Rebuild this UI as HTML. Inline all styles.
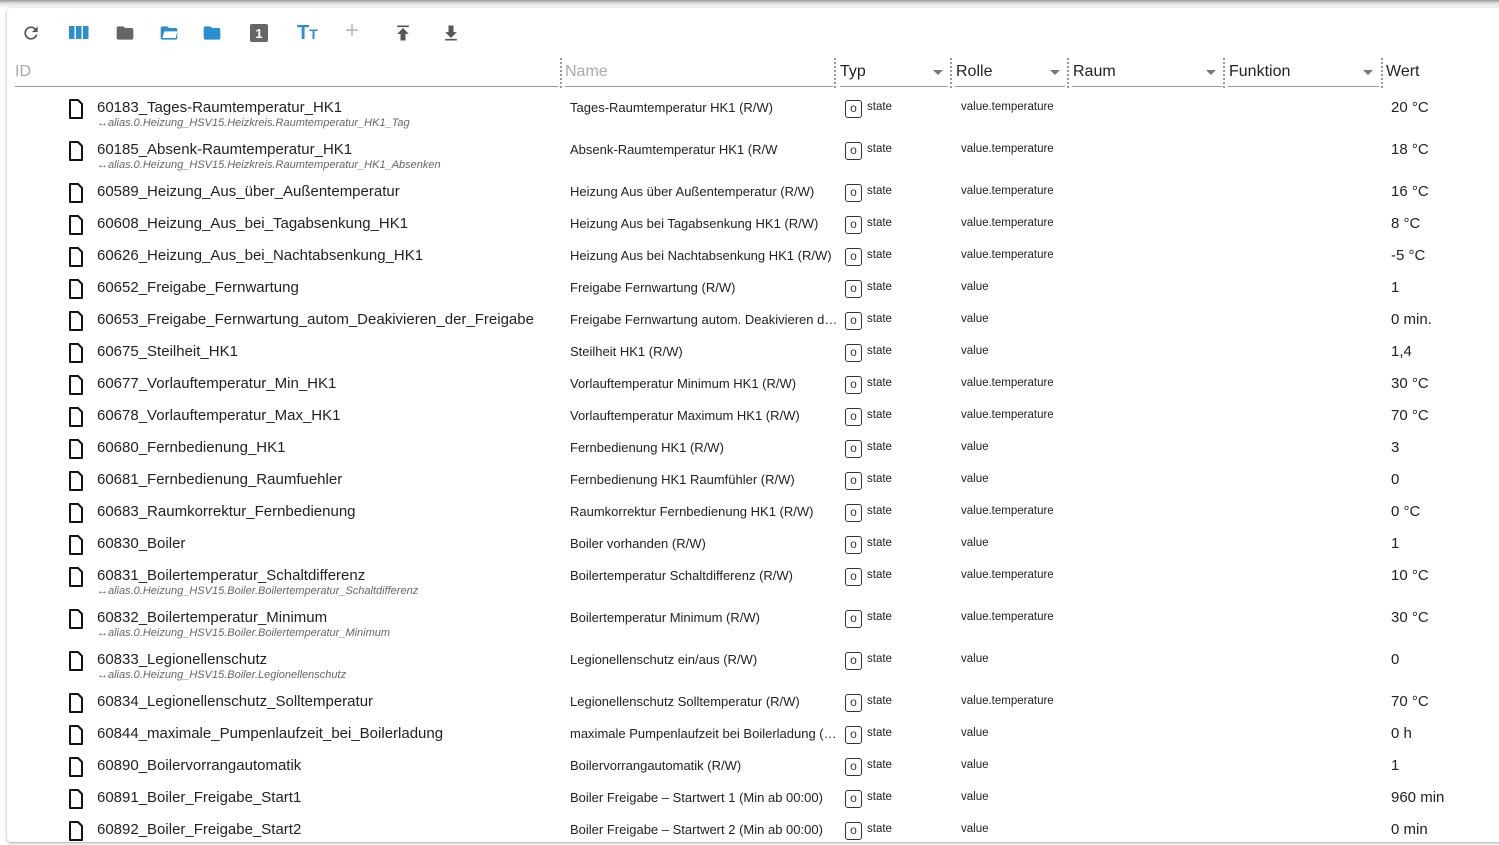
<!DOCTYPE html>
<html><head><meta charset="utf-8"><style>
body{margin:0;width:1499px;height:845px;overflow:hidden;background:#fff;font-family:"Liberation Sans",sans-serif;position:relative}
.topbar{position:absolute;left:0;top:0;width:1499px;height:8px;background:linear-gradient(#999,#ddd 40%,#fff)}
.card{position:absolute;left:7px;top:8px;width:1500px;height:834px;background:#fff;border-radius:4px;box-shadow:0 1px 3px rgba(0,0,0,.35)}
.a{position:absolute;white-space:nowrap}
.tb{position:absolute;top:23px}
.hd{position:absolute;top:63px;font-size:16px;color:#222}
.ul{position:absolute;top:86px;height:1px;background:#999}
.sep{position:absolute;top:58px;height:30px;border-left:2px dotted #999}
.arr{position:absolute;top:70px;width:0;height:0;border-left:5px solid transparent;border-right:5px solid transparent;border-top:5px solid #777}
.r{position:absolute;left:0;width:1499px;height:32px}
.r div{white-space:nowrap}
.fi{position:absolute;left:68px;top:8px}
.id{position:absolute;left:97px;top:8px;font-size:15px;color:#222}
.sub{position:absolute;left:97px;top:26px;font-size:11px;font-style:italic;color:#666}
.nm{position:absolute;left:570px;top:9px;font-size:13px;color:#222;width:272px;overflow:hidden;text-overflow:ellipsis}
.ty{position:absolute;left:845px;top:9px;width:15px;height:16px;border:1px solid #333;border-radius:3px;font-size:12px;text-align:center;line-height:15px;color:#333}
.st{position:absolute;left:867px;top:10px;font-size:11.5px;color:#222}
.ro{position:absolute;left:961px;top:10px;font-size:11.5px;color:#222}
.w{position:absolute;left:1391px;top:8px;font-size:15px;color:#222}
</style></head><body>
<div class="topbar"></div>
<div class="card"></div>
<svg class="tb" style="left:21px" width="20" height="20" viewBox="0 0 24 24"><path fill="#555" d="M17.65 6.35A7.960 7.96 0 0 0 12 4a8 8 0 1 0 7.73 10h-2.08A6 6 0 1 1 12 6c1.66 0 3.14.69 4.22 1.78L13 11h7V4z"/></svg>
<svg class="tb" style="left:69px" width="20" height="20" viewBox="0 0 20 20"><rect x="0" y="3" width="5.5" height="13" fill="#2a8fd0"/><rect x="7" y="3" width="5.5" height="13" fill="#2a8fd0"/><rect x="14" y="3" width="5.5" height="13" fill="#2a8fd0"/></svg>
<svg class="tb" style="left:115px" width="20" height="20" viewBox="0 0 24 24"><path fill="#666" d="M10 4H4c-1.1 0-2 .9-2 2v12c0 1.1.9 2 2 2h16c1.1 0 2-.9 2-2V8c0-1.1-.9-2-2-2h-8z"/></svg>
<svg class="tb" style="left:159px" width="20" height="20" viewBox="0 0 24 24"><path fill="#2a8fd0" d="M20 6h-8l-2-2H4c-1.1 0-2 .9-2 2v12c0 1.1.9 2 2 2h16c1.1 0 2-.9 2-2V8c0-1.1-.9-2-2-2zm0 12H4l2.5-8H22z"/></svg>
<svg class="tb" style="left:202px" width="20" height="20" viewBox="0 0 24 24"><path fill="#2a8fd0" d="M10 4H4c-1.1 0-2 .9-2 2v12c0 1.1.9 2 2 2h16c1.1 0 2-.9 2-2V8c0-1.1-.9-2-2-2h-8z"/></svg>
<svg class="tb" style="left:249px" width="20" height="20" viewBox="0 0 20 20"><rect x="1" y="1" width="18" height="18" rx="2" fill="#666"/><text x="10" y="15" font-size="13" fill="#fff" text-anchor="middle" font-family="Liberation Sans" font-weight="bold">1</text></svg>
<div class="a" style="left:297px;top:22px;font-size:20px;font-weight:bold;color:#2a8fd0">T<span style="font-size:14px">T</span></div>
<div class="a" style="left:345px;top:19px;font-size:24px;color:#bbb;line-height:24px">+</div>
<svg class="tb" style="left:393px" width="20" height="20" viewBox="0 0 24 24"><path fill="#555" d="M5 3h14v2H5zm7 3l-7 7h4v8h6v-8h4z"/></svg>
<svg class="tb" style="left:441px" width="20" height="20" viewBox="0 0 24 24"><path fill="#555" d="M5 19h14v2H5zm7-1l7-7h-4V3H9v8H5z"/></svg>
<div class="hd" style="left:15px;color:#aaa">ID</div><div class="ul" style="left:15px;width:543px"></div>
<div class="sep" style="left:560px"></div>
<div class="hd" style="left:565px;color:#aaa">Name</div><div class="ul" style="left:565px;width:268px"></div>
<div class="sep" style="left:834px"></div>
<div class="hd" style="left:840px">Typ</div><div class="arr" style="left:933px"></div><div class="ul" style="left:840px;width:108px"></div>
<div class="sep" style="left:950px"></div>
<div class="hd" style="left:956px">Rolle</div><div class="arr" style="left:1050px"></div><div class="ul" style="left:955px;width:110px"></div>
<div class="sep" style="left:1067px"></div>
<div class="hd" style="left:1073px">Raum</div><div class="arr" style="left:1206px"></div><div class="ul" style="left:1072px;width:150px"></div>
<div class="sep" style="left:1223px"></div>
<div class="hd" style="left:1229px">Funktion</div><div class="arr" style="left:1363px"></div><div class="ul" style="left:1228px;width:151px"></div>
<div class="sep" style="left:1381px"></div>
<div class="hd" style="left:1386px">Wert</div>

<svg width="0" height="0" style="position:absolute"><defs><symbol id="f" viewBox="0 0 16 20"><path d="M2 1h8l4 4v14H2z" fill="none" stroke="#111" stroke-width="2" stroke-linejoin="round"/></symbol></defs></svg>

<div class="r" style="top:91px"><svg class="fi" width="16" height="20"><use href="#f"/></svg><div class="id">60183_Tages-Raumtemperatur_HK1</div><div class="sub">↔alias.0.Heizung_HSV15.Heizkreis.Raumtemperatur_HK1_Tag</div><div class="nm">Tages-Raumtemperatur HK1 (R/W)</div><div class="ty">o</div><div class="st">state</div><div class="ro">value.temperature</div><div class="w">20 °C</div></div>
<div class="r" style="top:133px"><svg class="fi" width="16" height="20"><use href="#f"/></svg><div class="id">60185_Absenk-Raumtemperatur_HK1</div><div class="sub">↔alias.0.Heizung_HSV15.Heizkreis.Raumtemperatur_HK1_Absenken</div><div class="nm">Absenk-Raumtemperatur HK1 (R/W</div><div class="ty">o</div><div class="st">state</div><div class="ro">value.temperature</div><div class="w">18 °C</div></div>
<div class="r" style="top:175px"><svg class="fi" width="16" height="20"><use href="#f"/></svg><div class="id">60589_Heizung_Aus_über_Außentemperatur</div><div class="nm">Heizung Aus über Außentemperatur (R/W)</div><div class="ty">o</div><div class="st">state</div><div class="ro">value.temperature</div><div class="w">16 °C</div></div>
<div class="r" style="top:207px"><svg class="fi" width="16" height="20"><use href="#f"/></svg><div class="id">60608_Heizung_Aus_bei_Tagabsenkung_HK1</div><div class="nm">Heizung Aus bei Tagabsenkung HK1 (R/W)</div><div class="ty">o</div><div class="st">state</div><div class="ro">value.temperature</div><div class="w">8 °C</div></div>
<div class="r" style="top:239px"><svg class="fi" width="16" height="20"><use href="#f"/></svg><div class="id">60626_Heizung_Aus_bei_Nachtabsenkung_HK1</div><div class="nm">Heizung Aus bei Nachtabsenkung HK1 (R/W)</div><div class="ty">o</div><div class="st">state</div><div class="ro">value.temperature</div><div class="w">-5 °C</div></div>
<div class="r" style="top:271px"><svg class="fi" width="16" height="20"><use href="#f"/></svg><div class="id">60652_Freigabe_Fernwartung</div><div class="nm">Freigabe Fernwartung (R/W)</div><div class="ty">o</div><div class="st">state</div><div class="ro">value</div><div class="w">1</div></div>
<div class="r" style="top:303px"><svg class="fi" width="16" height="20"><use href="#f"/></svg><div class="id">60653_Freigabe_Fernwartung_autom_Deakivieren_der_Freigabe</div><div class="nm">Freigabe Fernwartung autom. Deakivieren der Freigabe</div><div class="ty">o</div><div class="st">state</div><div class="ro">value</div><div class="w">0 min.</div></div>
<div class="r" style="top:335px"><svg class="fi" width="16" height="20"><use href="#f"/></svg><div class="id">60675_Steilheit_HK1</div><div class="nm">Steilheit HK1 (R/W)</div><div class="ty">o</div><div class="st">state</div><div class="ro">value</div><div class="w">1,4</div></div>
<div class="r" style="top:367px"><svg class="fi" width="16" height="20"><use href="#f"/></svg><div class="id">60677_Vorlauftemperatur_Min_HK1</div><div class="nm">Vorlauftemperatur Minimum HK1 (R/W)</div><div class="ty">o</div><div class="st">state</div><div class="ro">value.temperature</div><div class="w">30 °C</div></div>
<div class="r" style="top:399px"><svg class="fi" width="16" height="20"><use href="#f"/></svg><div class="id">60678_Vorlauftemperatur_Max_HK1</div><div class="nm">Vorlauftemperatur Maximum HK1 (R/W)</div><div class="ty">o</div><div class="st">state</div><div class="ro">value.temperature</div><div class="w">70 °C</div></div>
<div class="r" style="top:431px"><svg class="fi" width="16" height="20"><use href="#f"/></svg><div class="id">60680_Fernbedienung_HK1</div><div class="nm">Fernbedienung HK1 (R/W)</div><div class="ty">o</div><div class="st">state</div><div class="ro">value</div><div class="w">3</div></div>
<div class="r" style="top:463px"><svg class="fi" width="16" height="20"><use href="#f"/></svg><div class="id">60681_Fernbedienung_Raumfuehler</div><div class="nm">Fernbedienung HK1 Raumfühler (R/W)</div><div class="ty">o</div><div class="st">state</div><div class="ro">value</div><div class="w">0</div></div>
<div class="r" style="top:495px"><svg class="fi" width="16" height="20"><use href="#f"/></svg><div class="id">60683_Raumkorrektur_Fernbedienung</div><div class="nm">Raumkorrektur Fernbedienung HK1 (R/W)</div><div class="ty">o</div><div class="st">state</div><div class="ro">value.temperature</div><div class="w">0 °C</div></div>
<div class="r" style="top:527px"><svg class="fi" width="16" height="20"><use href="#f"/></svg><div class="id">60830_Boiler</div><div class="nm">Boiler vorhanden (R/W)</div><div class="ty">o</div><div class="st">state</div><div class="ro">value</div><div class="w">1</div></div>
<div class="r" style="top:559px"><svg class="fi" width="16" height="20"><use href="#f"/></svg><div class="id">60831_Boilertemperatur_Schaltdifferenz</div><div class="sub">↔alias.0.Heizung_HSV15.Boiler.Boilertemperatur_Schaltdifferenz</div><div class="nm">Boilertemperatur Schaltdifferenz (R/W)</div><div class="ty">o</div><div class="st">state</div><div class="ro">value.temperature</div><div class="w">10 °C</div></div>
<div class="r" style="top:601px"><svg class="fi" width="16" height="20"><use href="#f"/></svg><div class="id">60832_Boilertemperatur_Minimum</div><div class="sub">↔alias.0.Heizung_HSV15.Boiler.Boilertemperatur_Minimum</div><div class="nm">Boilertemperatur Minimum (R/W)</div><div class="ty">o</div><div class="st">state</div><div class="ro">value.temperature</div><div class="w">30 °C</div></div>
<div class="r" style="top:643px"><svg class="fi" width="16" height="20"><use href="#f"/></svg><div class="id">60833_Legionellenschutz</div><div class="sub">↔alias.0.Heizung_HSV15.Boiler.Legionellenschutz</div><div class="nm">Legionellenschutz ein/aus (R/W)</div><div class="ty">o</div><div class="st">state</div><div class="ro">value</div><div class="w">0</div></div>
<div class="r" style="top:685px"><svg class="fi" width="16" height="20"><use href="#f"/></svg><div class="id">60834_Legionellenschutz_Solltemperatur</div><div class="nm">Legionellenschutz Solltemperatur (R/W)</div><div class="ty">o</div><div class="st">state</div><div class="ro">value.temperature</div><div class="w">70 °C</div></div>
<div class="r" style="top:717px"><svg class="fi" width="16" height="20"><use href="#f"/></svg><div class="id">60844_maximale_Pumpenlaufzeit_bei_Boilerladung</div><div class="nm">maximale Pumpenlaufzeit bei Boilerladung (R/W)</div><div class="ty">o</div><div class="st">state</div><div class="ro">value</div><div class="w">0 h</div></div>
<div class="r" style="top:749px"><svg class="fi" width="16" height="20"><use href="#f"/></svg><div class="id">60890_Boilervorrangautomatik</div><div class="nm">Boilervorrangautomatik (R/W)</div><div class="ty">o</div><div class="st">state</div><div class="ro">value</div><div class="w">1</div></div>
<div class="r" style="top:781px"><svg class="fi" width="16" height="20"><use href="#f"/></svg><div class="id">60891_Boiler_Freigabe_Start1</div><div class="nm">Boiler Freigabe – Startwert 1 (Min ab 00:00)</div><div class="ty">o</div><div class="st">state</div><div class="ro">value</div><div class="w">960 min</div></div>
<div class="r" style="top:813px"><svg class="fi" width="16" height="20"><use href="#f"/></svg><div class="id">60892_Boiler_Freigabe_Start2</div><div class="nm">Boiler Freigabe – Startwert 2 (Min ab 00:00)</div><div class="ty">o</div><div class="st">state</div><div class="ro">value</div><div class="w">0 min</div></div>
</body></html>
